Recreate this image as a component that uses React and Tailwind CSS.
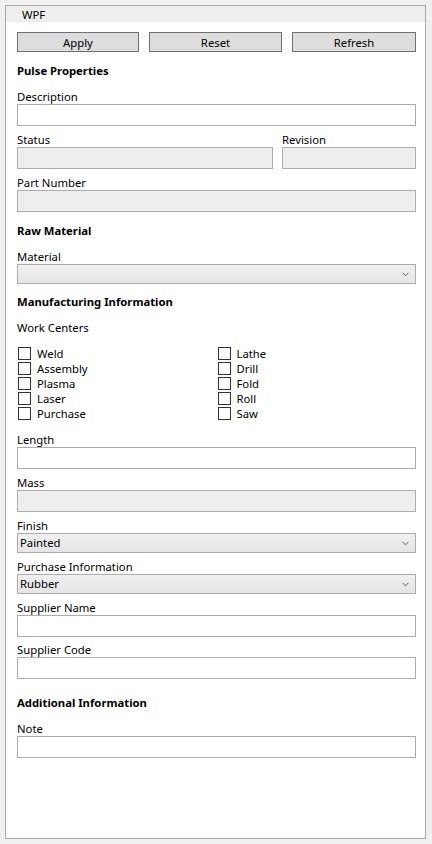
const font = { fontFamily: '"Noto Sans", "Liberation Sans", sans-serif' };

const Label = ({ children, className = "" }) => (
  <div className={`h-[15px] text-[11.3px] leading-[15px] text-black ${className}`}>{children}</div>
);

const Heading = ({ children, className = "" }) => (
  <div className={`h-[16px] text-[11.3px] leading-[16px] font-bold text-black ${className}`}>{children}</div>
);

const TextBox = ({ disabled }) => (
  <div
    className={`h-[22px] border ${
      disabled ? "bg-[#eeeeee] border-[#adadad]" : "bg-white border-[#ababab]"
    }`}
  />
);

const Chevron = () => (
  <svg width="7" height="5" viewBox="0 0 7 5" className="mr-[6px]">
    <path d="M0.5 0.8 L3.5 3.8 L6.5 0.8" fill="none" stroke="#606060" strokeWidth="1" />
  </svg>
);

const ComboBox = ({ value }) => (
  <div className="h-[20px] border border-[#acacac] bg-gradient-to-b from-[#f0f0f0] to-[#e5e5e5] flex items-center justify-between pl-[2px] text-[11.3px] text-black">
    <span className="leading-[18px]">{value}</span>
    <Chevron />
  </div>
);

const Check = ({ label }) => (
  <div className="h-[15px] flex items-center">
    <div className="ml-px w-[13px] h-[13px] border border-[#333333] bg-white" />
    <span className="ml-[6px] text-[11.3px] leading-[13px] text-black">{label}</span>
  </div>
);

const Btn = ({ children, className = "" }) => (
  <div
    className={`h-[20px] border border-[#707070] bg-[#dddddd] flex items-center justify-center text-[11.3px] leading-[15px] text-black ${className}`}
  >
    {children}
  </div>
);

export default function App() {
  const left = ["Weld", "Assembly", "Plasma", "Laser", "Purchase"];
  const right = ["Lathe", "Drill", "Fold", "Roll", "Saw"];

  return (
    <div className="w-[432px] h-[844px] bg-[#f0f0f0] p-[5px]" style={font}>
      <div className="w-[421px] h-[834px] border border-[#a9a9a9] bg-white flex flex-col">
        <div className="h-[16px] bg-[#eeeeee] pl-[16px] text-[11.3px] leading-[17px] text-black">WPF</div>

        <div className="pl-[11px] pr-[9px] flex flex-col">
          <div className="mt-[10px] flex">
            <Btn className="w-[122px]">Apply</Btn>
            <Btn className="w-[133px] ml-[10px]">Reset</Btn>
            <Btn className="flex-1 ml-[10px]">Refresh</Btn>
          </div>

          <Heading className="mt-[11px]">Pulse Properties</Heading>

          <Label className="mt-[10px]">Description</Label>
          <TextBox />

          <div className="mt-[6px] grid grid-cols-[256px_1fr] gap-x-[9px]">
            <div>
              <Label>Status</Label>
              <TextBox disabled />
            </div>
            <div>
              <Label>Revision</Label>
              <TextBox disabled />
            </div>
          </div>

          <Label className="mt-[6px]">Part Number</Label>
          <TextBox disabled />

          <Heading className="mt-[11px]">Raw Material</Heading>

          <Label className="mt-[10px]">Material</Label>
          <ComboBox value="" />

          <Heading className="mt-[10px]">Manufacturing Information</Heading>

          <Label className="mt-[10px]">Work Centers</Label>

          <div className="mt-[11px] grid grid-cols-2">
            <div className="flex flex-col">
              {left.map((l) => (
                <Check key={l} label={l} />
              ))}
            </div>
            <div className="flex flex-col">
              {right.map((l) => (
                <Check key={l} label={l} />
              ))}
            </div>
          </div>

          <Label className="mt-[11px]">Length</Label>
          <TextBox />

          <Label className="mt-[6px]">Mass</Label>
          <TextBox disabled />

          <Label className="mt-[6px]">Finish</Label>
          <ComboBox value="Painted" />

          <Label className="mt-[6px]">Purchase Information</Label>
          <ComboBox value="Rubber" />

          <Label className="mt-[6px]">Supplier Name</Label>
          <TextBox />

          <Label className="mt-[5px]">Supplier Code</Label>
          <TextBox />

          <Heading className="mt-[16px]">Additional Information</Heading>

          <Label className="mt-[10px]">Note</Label>
          <TextBox />
        </div>
      </div>
    </div>
  );
}
